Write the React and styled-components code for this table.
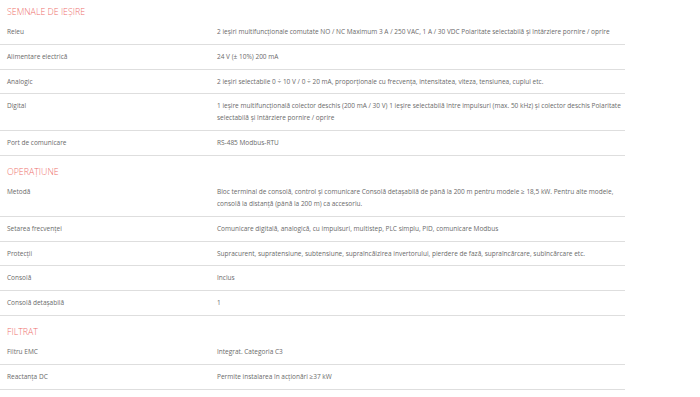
import React from 'react'
import styled, { createGlobalStyle } from 'styled-components'

const GlobalStyle = createGlobalStyle`
  html, body {
    margin: 0;
    padding: 0;
    background: #fff;
  }
  body {
    font-family: "Open Sans", "Liberation Sans", sans-serif;
  }
`;

const Page = styled.div`
  width: 625px;
  margin-top: -4.4px;
`;

const SectionTitle = styled.h3`
  margin: 0;
  padding: 10.5px 7px 0;
  height: 24.7px;
  box-sizing: border-box;
  font-size: 8.8px;
  line-height: 12px;
  font-weight: 300;
  color: #ee6f6c;
  text-transform: uppercase;
`;

const Table = styled.div`
  display: flex;
  flex-direction: column;
`;

const Row = styled.div`
  display: grid;
  grid-template-columns: 210px 1fr;
  border-bottom: 1px solid #dedede;
  padding: 5.85px 0;
  font-size: 6.5px;
  line-height: 12px;
  color: #6a6a6a;
`;

const Label = styled.div`
  padding-left: 7px;
`;

const Value = styled.div`
  padding-left: 7px;
`;

const sections = [
  {
    title: 'Semnale de ieșire',
    rows: [
      ['Releu', '2 ieșiri multifuncționale comutate NO / NC Maximum 3 A / 250 VAC, 1 A / 30 VDC Polaritate selectabilă și întârziere pornire / oprire'],
      ['Alimentare electrică', '24 V (± 10%) 200 mA'],
      ['Analogic', '2 ieșiri selectabile 0 ÷ 10 V / 0 ÷ 20 mA, proporționale cu frecvența, intensitatea, viteza, tensiunea, cuplul etc.'],
      ['Digital', '1 ieșire multifuncțională colector deschis (200 mA / 30 V) 1 ieșire selectabilă între impulsuri (max. 50 kHz) și colector deschis Polaritate selectabilă și întârziere pornire / oprire'],
      ['Port de comunicare', 'RS-485 Modbus-RTU'],
    ],
  },
  {
    title: 'Operațiune',
    rows: [
      ['Metodă', 'Bloc terminal de consolă, control și comunicare Consolă detașabilă de până la 200 m pentru modele ≥ 18,5 kW. Pentru alte modele, consolă la distanță (până la 200 m) ca accesoriu.'],
      ['Setarea frecvenței', 'Comunicare digitală, analogică, cu impulsuri, multistep, PLC simplu, PID, comunicare Modbus'],
      ['Protecții', 'Supracurent, supratensiune, subtensiune, supraîncălzirea invertorului, pierdere de fază, supraîncărcare, subîncărcare etc.'],
      ['Consolă', 'Inclus'],
      ['Consolă detașabilă', '1'],
    ],
  },
  {
    title: 'Filtrat',
    rows: [
      ['Filtru EMC', 'Integrat. Categoria C3'],
      ['Reactanța DC', 'Permite instalarea în acționări ≥37 kW'],
    ],
  },
];

const App = () => (
  <Page>
    <GlobalStyle />
    {sections.map(section => (
      <div key={section.title}>
        <SectionTitle>{section.title}</SectionTitle>
        <Table>
          {section.rows.map(([label, value]) => (
            <Row key={label}>
              <Label>{label}</Label>
              <Value>{value}</Value>
            </Row>
          ))}
        </Table>
      </div>
    ))}
  </Page>
);

export default App;
